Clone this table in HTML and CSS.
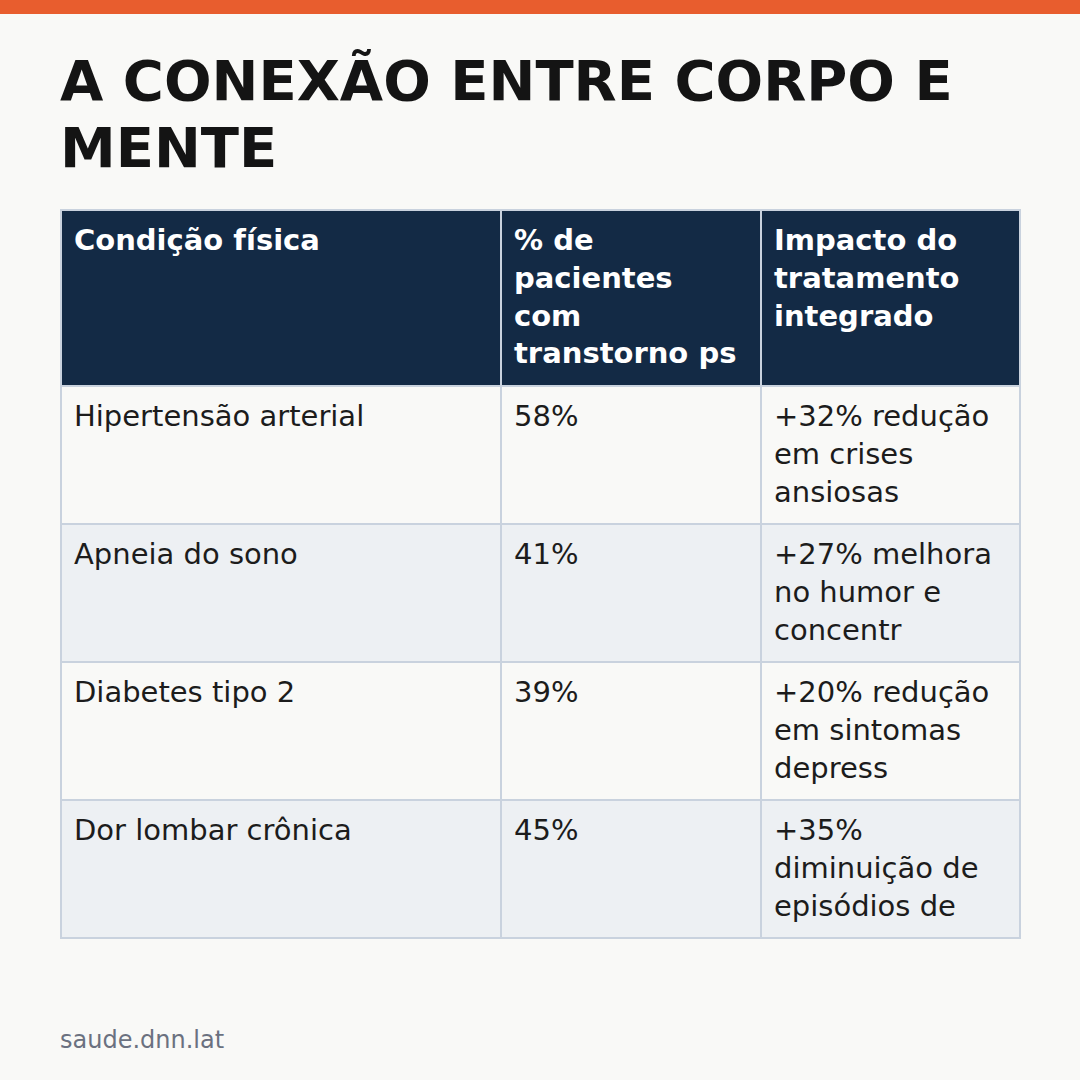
FILE: index.html
```html
<!DOCTYPE html>
<html lang="pt">
<head>
<meta charset="utf-8">
<link rel="stylesheet" href="styles.css">
</head>
<body>
<div class="page">
  <div class="bar"></div>
  <main class="content">
    <h1 class="title">A CONEXÃO ENTRE CORPO E MENTE</h1>
    <table class="data">
      <colgroup>
        <col class="c1"><col class="c2"><col class="c3">
      </colgroup>
      <thead>
        <tr>
          <th>Condição física</th>
          <th>% de pacientes com transtorno ps</th>
          <th>Impacto do tratamento integrado</th>
        </tr>
      </thead>
      <tbody>
        <tr>
          <td>Hipertensão arterial</td>
          <td>58%</td>
          <td>+32% redução em crises ansiosas</td>
        </tr>
        <tr class="alt">
          <td>Apneia do sono</td>
          <td>41%</td>
          <td>+27% melhora no humor e concentr</td>
        </tr>
        <tr>
          <td>Diabetes tipo 2</td>
          <td>39%</td>
          <td>+20% redução em sintomas depress</td>
        </tr>
        <tr class="alt">
          <td>Dor lombar crônica</td>
          <td>45%</td>
          <td>+35% diminuição de episódios de</td>
        </tr>
      </tbody>
    </table>
  </main>
  <footer class="footer">saude.dnn.lat</footer>
</div>
</body>
</html>
```
FILE: styles.css
```css
html, body {
  margin: 0;
  padding: 0;
  background: #f9f9f7;
}
body {
  font-family: "DejaVu Sans", "Liberation Sans", sans-serif;
  color: #1c1c1c;
}
.page {
  width: 1080px;
  height: 1080px;
  display: flex;
  flex-direction: column;
  overflow: hidden;
}
.bar {
  height: 14px;
  background: #e85d2e;
  flex: none;
}
.content {
  padding: 33px 60px 0 60px;
}
.title {
  margin: 0;
  font-size: 56px;
  line-height: 1.2;
  font-weight: bold;
  color: #141414;
}
.data {
  margin-top: 28px;
  width: 959px;
  border-collapse: collapse;
  table-layout: fixed;
  font-size: 29px;
  line-height: 1.3;
}
.c1 { width: 440px; }
.c2 { width: 260px; }
.c3 { width: 259px; }
.data th, .data td {
  border: 2px solid #c9d2de;
  padding: 11px 12px 12px 12px;
  text-align: left;
  vertical-align: top;
}
.data th {
  background: #132a45;
  color: #ffffff;
  font-weight: bold;
}
.data td {
  color: #1c1c1c;
  height: 113px;
}
.data tr.alt td {
  background: #edf0f3;
}
.footer {
  margin-top: auto;
  padding: 0 60px 26px 60px;
  font-size: 24px;
  color: #6b7180;
}
```
